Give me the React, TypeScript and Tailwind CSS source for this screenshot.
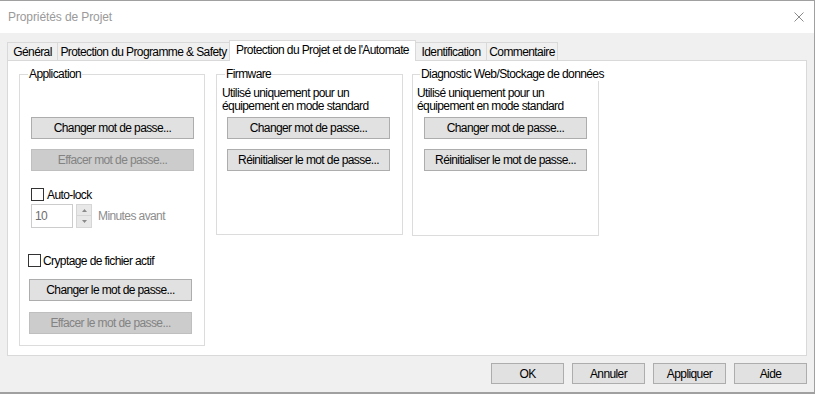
import React from "react";

function Btn({
  children,
  disabled,
  className,
}: {
  children: React.ReactNode;
  disabled?: boolean;
  className?: string;
}) {
  return (
    <div
      className={
        (disabled
          ? "bg-[#cccccc] border-[#bfbfbf] text-[#838383] "
          : "bg-[#e1e1e1] border-[#adadad] text-black ") +
        "border flex items-center justify-center whitespace-nowrap " +
        (className ?? "")
      }
    >
      {children}
    </div>
  );
}

function Check() {
  return <div className="w-[13px] h-[13px] border border-[#333333] bg-white shrink-0" />;
}

function Tab({ children, className }: { children: React.ReactNode; className: string }) {
  return (
    <div
      className={
        "h-[18px] border-t border-l border-r border-[#d9d9d9] bg-[#f0f0f0] flex items-center justify-center whitespace-nowrap pt-[1px] " +
        className
      }
    >
      {children}
    </div>
  );
}

function GroupLabel({ children, className }: { children: React.ReactNode; className: string }) {
  return (
    <span
      className={
        "absolute -top-[8px] px-[1px] bg-white leading-[14px] whitespace-nowrap " + className
      }
    >
      {children}
    </span>
  );
}

export default function App() {
  return (
    <div className="w-[815px] h-[394px] bg-[#f0f0f0] border-t border-r border-b-2 border-[#a0a0a0] flex flex-col font-['Liberation_Sans',Arial,sans-serif] text-[12px] tracking-[-0.6px] text-black overflow-hidden">
      {/* Title bar */}
      <div className="h-[32px] bg-white flex items-center justify-between pl-[8px] pr-[10px] shrink-0">
        <span className="text-[#9a9a9a] text-[12px] tracking-[-0.1px]">Propriétés de Projet</span>
        <svg width="10" height="10" viewBox="0 0 10 10" className="block">
          <path d="M0.5 0.5 L9.5 9.5 M9.5 0.5 L0.5 9.5" stroke="#8a8a8a" strokeWidth="1" fill="none" />
        </svg>
      </div>

      {/* Body */}
      <div className="flex-1 flex flex-col pl-[7px] pt-[7px]">
        {/* Tabs */}
        <div className="flex items-end h-[20px]">
          <Tab className="w-[51px]">Général</Tab>
          <Tab className="w-[173px] -ml-px">Protection du Programme &amp; Safety</Tab>
          <div className="w-[187px] h-[21px] -ml-px -mb-px relative z-10 border-t border-l border-r border-[#d9d9d9] bg-white flex items-center justify-center pb-[2px] whitespace-nowrap">
            Protection du Projet et de l'Automate
          </div>
          <Tab className="w-[72px] -ml-px">Identification</Tab>
          <Tab className="w-[72px] -ml-px">Commentaire</Tab>
        </div>

        {/* Panel */}
        <div className="w-[800px] h-[296px] bg-white border border-[#d9d9d9] flex items-start pl-[11px] pt-[13px]">
          {/* Application */}
          <div className="relative w-[186px] h-[272px] border border-[#dcdcdc] flex flex-col">
            <GroupLabel className="left-[8px]">Application</GroupLabel>
            <Btn className="mt-[42px] ml-[11px] w-[163px] h-[22px]">Changer mot de passe...</Btn>
            <Btn disabled className="mt-[10px] ml-[11px] w-[163px] h-[22px]">
              Effacer mot de passe...
            </Btn>
            <div className="mt-[17px] ml-[11px] flex items-center h-[13px] gap-[3px]">
              <Check />
              <span>Auto-lock</span>
            </div>
            <div className="mt-[3px] ml-[11px] flex items-center h-[24px]">
              <div className="w-[42px] h-[24px] border border-[#cccccc] bg-white flex items-center pl-[3px] text-[#6d6d6d]">
                10
              </div>
              <div className="ml-[3px] w-[16px] h-[24px] flex flex-col">
                <div className="h-[12px] border border-[#d6d6d6] bg-[#e8e8e8] flex items-center justify-center">
                  <svg width="5" height="3" viewBox="0 0 5 3">
                    <path d="M2.5 0 L5 3 L0 3 Z" fill="#8a8a8a" />
                  </svg>
                </div>
                <div className="h-[12px] border border-t-0 border-[#d6d6d6] bg-[#e8e8e8] flex items-center justify-center">
                  <svg width="5" height="3" viewBox="0 0 5 3">
                    <path d="M0 0 L5 0 L2.5 3 Z" fill="#8a8a8a" />
                  </svg>
                </div>
              </div>
              <span className="ml-[6px] text-[#8d8d8d]">Minutes avant</span>
            </div>
            <div className="mt-[26px] ml-[8px] flex items-center h-[13px] gap-[2px]">
              <Check />
              <span>Cryptage de fichier actif</span>
            </div>
            <Btn className="mt-[12px] ml-[9px] w-[163px] h-[22px]">Changer le mot de passe...</Btn>
            <Btn disabled className="mt-[11px] ml-[9px] w-[163px] h-[22px]">
              Effacer le mot de passe...
            </Btn>
          </div>

          {/* Firmware */}
          <div className="relative ml-[11px] w-[187px] h-[161px] border border-[#dcdcdc] flex flex-col">
            <GroupLabel className="left-[8px]">Firmware</GroupLabel>
            <div className="mt-[12px] pl-[5px] leading-[13px] whitespace-nowrap">
              Utilisé uniquement pour un
              <br />
              équipement en mode standard
            </div>
            <Btn className="mt-[4px] ml-[10px] w-[163px] h-[22px]">Changer mot de passe...</Btn>
            <Btn className="mt-[10px] ml-[10px] w-[163px] h-[22px]">Réinitialiser le mot de passe...</Btn>
          </div>

          {/* Diagnostic */}
          <div className="relative ml-[9px] w-[187px] h-[162px] border border-[#dcdcdc] flex flex-col">
            <GroupLabel className="left-[7px]">Diagnostic Web/Stockage de données</GroupLabel>
            <div className="mt-[12px] pl-[4px] leading-[13px] whitespace-nowrap">
              Utilisé uniquement pour un
              <br />
              équipement en mode standard
            </div>
            <Btn className="mt-[4px] ml-[11px] w-[163px] h-[22px]">Changer mot de passe...</Btn>
            <Btn className="mt-[10px] ml-[11px] w-[163px] h-[22px]">Réinitialiser le mot de passe...</Btn>
          </div>
        </div>

        {/* Bottom buttons */}
        <div className="w-[800px] mt-[7px] flex justify-end gap-[8px]">
          <Btn className="w-[73px] h-[21px]">OK</Btn>
          <Btn className="w-[73px] h-[21px]">Annuler</Btn>
          <Btn className="w-[73px] h-[21px]">Appliquer</Btn>
          <Btn className="w-[73px] h-[21px]">Aide</Btn>
        </div>
      </div>
    </div>
  );
}
